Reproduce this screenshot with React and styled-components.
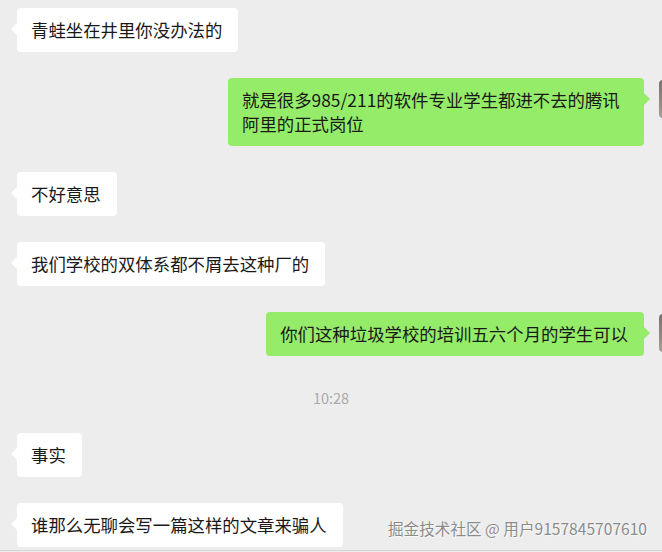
import React from 'react';
import styled, { createGlobalStyle } from 'styled-components';

const messages = [
    { id: 1, side: 'left', text: '青蛙坐在井里你没办法的' },
    { id: 2, side: 'right', text: '就是很多985/211的软件专业学生都进不去的腾讯阿里的正式岗位' },
    { id: 3, side: 'left', text: '不好意思' },
    { id: 4, side: 'left', text: '我们学校的双体系都不屑去这种厂的' },
    { id: 5, side: 'right', text: '你们这种垃圾学校的培训五六个月的学生可以' },
    { id: 6, type: 'time', text: '10:28' },
    { id: 7, side: 'left', text: '事实' },
    { id: 8, side: 'left', text: '谁那么无聊会写一篇这样的文章来骗人' },
];

export default function App() {
    return (
        <>
            <GlobalStyle />
            <Page>
                <ChatList>
                    {messages.map((msg) => {
                        if (msg.type === 'time') {
                            return <TimeStamp key={msg.id}>{msg.text}</TimeStamp>;
                        }
                        return (
                            <Row key={msg.id} side={msg.side}>
                                <Bubble side={msg.side}>{msg.text}</Bubble>
                                {msg.side === 'right' && <Avatar />}
                            </Row>
                        );
                    })}
                </ChatList>
                <Divider />
                <Watermark>掘金技术社区 @ 用户9157845707610</Watermark>
            </Page>
        </>
    );
}

const GlobalStyle = createGlobalStyle`
    html, body {
        margin: 0;
        padding: 0;
        background: #ededed;
    }
    * {
        box-sizing: border-box;
    }
`;

const Page = styled.div`
    position: relative;
    width: 662px;
    height: 552px;
    overflow: hidden;
    background: #ededed;
    display: flex;
    flex-direction: column;
    font-family: "Noto Sans CJK SC", "Noto Sans", sans-serif;
`;

const ChatList = styled.div`
    flex: 1;
    width: 699px;
    padding: 8px 0 0 17px;
    display: flex;
    flex-direction: column;
    gap: 26px;
    overflow: hidden;
`;

const Row = styled.div`
    display: flex;
    align-items: flex-start;
    justify-content: ${(p) => (p.side === 'right' ? 'flex-end' : 'flex-start')};
    gap: 15px;
`;

const Bubble = styled.div`
    position: relative;
    max-width: 416px;
    padding: 10px 16px 10px 14px;
    border-radius: 4px;
    font-size: 17.4px;
    line-height: 24px;
    color: #191919;
    background: ${(p) => (p.side === 'right' ? '#95ec69' : '#ffffff')};

    &::before {
        content: '';
        position: absolute;
        top: 15px;
        ${(p) => (p.side === 'right' ? 'right: -6px;' : 'left: -6px;')}
        border-top: 6px solid transparent;
        border-bottom: 6px solid transparent;
        ${(p) =>
            p.side === 'right'
                ? 'border-left: 6px solid #95ec69;'
                : 'border-right: 6px solid #ffffff;'}
    }
`;

const Avatar = styled.div`
    flex: none;
    width: 40px;
    height: 38px;
    margin-top: 2px;
    border-radius: 4px;
    background: linear-gradient(180deg, #7b736c 0%, #938a80 60%, #a89f95 100%);
`;

const TimeStamp = styled.div`
    margin-left: -17px;
    width: 662px;
    padding-top: 5px;
    height: 25px;
    line-height: 21px;
    text-align: center;
    font-size: 14.5px;
    color: #a9a9a9;
`;

const Divider = styled.div`
    flex: none;
    height: 2px;
    border-top: 1px solid #d4d4d4;
`;

const Watermark = styled.div`
    position: absolute;
    right: 15px;
    bottom: 13px;
    font-size: 15.6px;
    line-height: 22px;
    color: #8a8a8a;
    text-shadow: 0 0 1px #ffffff, 1px 1px 1px rgba(255, 255, 255, 0.8);
    white-space: nowrap;
`;
